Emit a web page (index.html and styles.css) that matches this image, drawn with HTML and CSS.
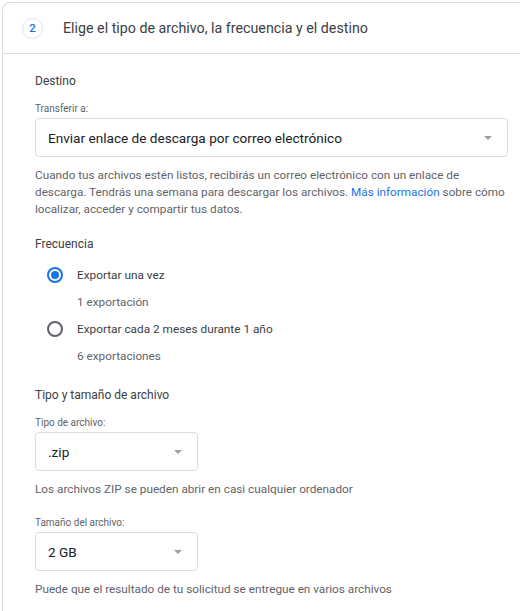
FILE: index.html
```html
<!DOCTYPE html>
<html lang="es">
<head>
    <meta charset="utf-8"/>
    <meta name="viewport" content="width=device-width, initial-scale=1.0">
    <title>Exportar datos</title>
    <link rel="stylesheet" href="styles.css">
</head>
<body>
    <div class="card">
        <div class="card-header">
            <span class="step">2</span>
            <h2>Elige el tipo de archivo, la frecuencia y el destino</h2>
        </div>
        <div class="card-body">
            <section class="section">
                <h3>Destino</h3>
                <label class="field-label">Transferir a:</label>
                <div class="select select-wide">
                    <span>Enviar enlace de descarga por correo electrónico</span>
                    <span class="arrow"></span>
                </div>
                <p class="help">Cuando tus archivos estén listos, recibirás un correo electrónico con un enlace de descarga. Tendrás una semana para descargar los archivos. <a href="#">Más información</a> sobre cómo localizar, acceder y compartir tus datos.</p>
            </section>

            <section class="section">
                <h3 class="tight">Frecuencia</h3>
                <div class="radio-row">
                    <span class="radio checked"></span>
                    <span class="radio-text">Exportar una vez</span>
                </div>
                <div class="radio-sub">1 exportación</div>
                <div class="radio-row">
                    <span class="radio"></span>
                    <span class="radio-text">Exportar cada 2 meses durante 1 año</span>
                </div>
                <div class="radio-sub">6 exportaciones</div>
            </section>

            <section class="section">
                <h3>Tipo y tamaño de archivo</h3>
                <label class="field-label">Tipo de archivo:</label>
                <div class="select select-small">
                    <span>.zip</span>
                    <span class="arrow"></span>
                </div>
                <p class="help">Los archivos ZIP se pueden abrir en casi cualquier ordenador</p>

                <label class="field-label field-gap">Tamaño del archivo:</label>
                <div class="select select-small">
                    <span>2 GB</span>
                    <span class="arrow"></span>
                </div>
                <p class="help">Puede que el resultado de tu solicitud se entregue en varios archivos</p>
            </section>
        </div>
    </div>
</body>
</html>
```

FILE: styles.css
```css
body {
    margin: 0;
    font-family: Roboto, "Liberation Sans", Arial, sans-serif;
    background: #fff;
    color: #3c4043;
    overflow: hidden;
}
.card {
    margin: 2px 0 0 2px;
    width: 560px;
    border: 1px solid #dadce0;
    border-right: none;
    border-radius: 8px 0 0 0;
}
.card-header {
    display: flex;
    align-items: center;
    height: 50px;
    padding-left: 19px;
    border-bottom: 1px solid #dadce0;
}
.step {
    display: flex;
    align-items: center;
    justify-content: center;
    width: 19px;
    height: 19px;
    border: 1px solid #d2e3fc;
    border-radius: 50%;
    color: #1a73e8;
    font-size: 11.5px;
    font-weight: 500;
}
.card-header h2 {
    margin: 0 0 0 20px;
    font-size: 14.25px;
    font-weight: 400;
    color: #3c4043;
}
.card-body {
    padding: 17px 0 0 32px;
    width: 473px;
}
.section {
    margin-bottom: 16px;
}
.section h3 {
    margin: 0 0 12px;
    font-size: 12px;
    font-weight: 400;
    line-height: 20px;
    color: #3c4043;
}
.section h3.tight {
    margin-bottom: 7px;
}
.field-label {
    display: block;
    font-size: 10px;
    line-height: 12px;
    color: #5f6368;
    margin-bottom: 3px;
}
.field-gap {
    margin-top: 19px;
}
.select {
    display: flex;
    align-items: center;
    justify-content: space-between;
    box-sizing: border-box;
    height: 39px;
    padding: 0 13px 0 12px;
    border: 1px solid #dadce0;
    border-radius: 4px;
    font-size: 13.6px;
    color: #202124;
}
.select-wide {
    width: 473px;
}
.select-small {
    width: 163px;
}
.arrow {
    width: 0;
    height: 0;
    border-left: 4px solid transparent;
    border-right: 4px solid transparent;
    border-top: 4px solid #9aa0a6;
    margin-right: 2px;
}
.help {
    margin: 10px 0 0;
    font-size: 11.75px;
    line-height: 17px;
    color: #5f6368;
}
.help a {
    color: #1a73e8;
    text-decoration: none;
}
.radio-row {
    display: flex;
    align-items: center;
    height: 28px;
    margin-left: 12px;
}
.radio {
    box-sizing: border-box;
    width: 16px;
    height: 16px;
    border: 2px solid #5f6368;
    border-radius: 50%;
    position: relative;
}
.radio.checked {
    border-color: #1a73e8;
}
.radio.checked::after {
    content: "";
    position: absolute;
    left: 2px;
    top: 2px;
    width: 8px;
    height: 8px;
    border-radius: 50%;
    background: #1a73e8;
}
.radio-text {
    margin-left: 14px;
    font-size: 11.8px;
    color: #3c4043;
}
.radio-sub {
    display: flex;
    align-items: center;
    height: 26px;
    margin-left: 42px;
    font-size: 11.75px;
    color: #5f6368;
}
```
